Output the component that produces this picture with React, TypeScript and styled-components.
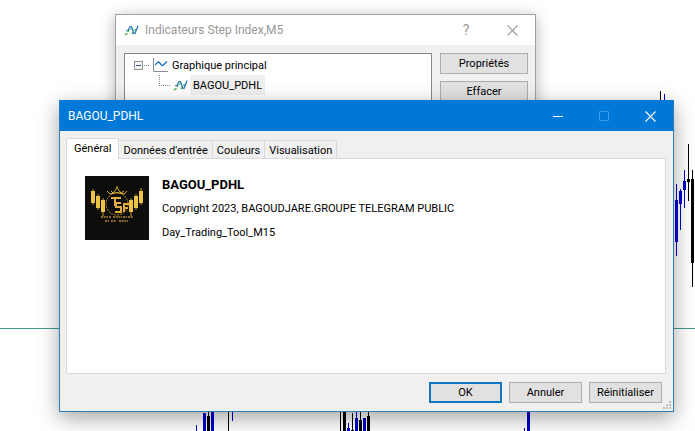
import React from "react";
import styled, { createGlobalStyle, css } from "styled-components";

const uiFont = `Roboto, "Noto Sans", sans-serif`;

const GlobalStyle = createGlobalStyle`
  * { box-sizing: border-box; }
  body { margin: 0; background: #fff; font-family: ${uiFont}; font-size: 11px; line-height: 16px; color: #000; }
  button { font: inherit; color: inherit; }
`;

const Desktop = styled.main`
  position: relative;
  min-height: 100vh;
  overflow: hidden;
`;

const ChartLayer = styled.svg`
  position: absolute;
  inset: 0;
  width: 100%;
  height: 100%;
`;

const IndicatorWindow = styled.section`
  position: absolute;
  top: 14px;
  left: 115px;
  right: 159px;
  background: #f0f0f0;
  border: 1px solid #a0a0a0;
  box-shadow: 0 3px 14px rgba(0, 0, 0, 0.3);
`;

const PropertiesWindow = styled.section`
  position: absolute;
  top: 100px;
  left: 59px;
  right: 21px;
  background: #f0f0f0;
  border: 1px solid #2b7cb8;
  border-top-color: #0078d7;
  box-shadow: 0 6px 20px rgba(0, 0, 0, 0.36);
`;

const TitleBar = styled.header<{ $active?: boolean }>`
  display: flex;
  align-items: center;
  height: 30px;
  padding-left: 8px;
  background: #fff;
  color: #999;
  ${(p) =>
    p.$active &&
    css`
      background: #0078d7;
      color: #fff;
    `}
`;

const WindowTitle = styled.h1`
  flex: 1;
  display: flex;
  align-items: center;
  gap: 6px;
  margin: 0;
  font-size: 12px;
  font-weight: 400;
`;

const CaptionButton = styled.button`
  display: grid;
  place-items: center;
  width: 46px;
  height: 30px;
  padding: 0;
  border: 0;
  background: none;
  font-size: 14px;
`;

const IndicatorBody = styled.div`
  display: flex;
  gap: 8px;
  padding: 8px 7px 8px 8px;
`;

const Tree = styled.ul`
  flex: 1;
  min-height: 96px;
  margin: 0;
  padding: 1px 9px;
  list-style: none;
  background: #fff;
  border: 1px solid #828790;
`;

const TreeItem = styled.li<{ $nested?: boolean }>`
  display: flex;
  align-items: center;
  height: 20px;
  gap: ${(p) => (p.$nested ? "2px" : "3px")};
  padding-left: ${(p) => (p.$nested ? "25px" : "0")};
`;

const Toggle = styled.button`
  width: 15px;
  height: 9px;
  padding: 0;
  border: 0;
  background: none;
  display: flex;
`;

const TreeLabel = styled.span<{ $selected?: boolean }>`
  padding: 3px 3px 1px;
  margin-left: ${(p) => (p.$selected ? "0" : "-2px")};
  background: ${(p) => (p.$selected ? "#f0f0f0" : "none")};
`;

const SideActions = styled.div`
  display: flex;
  flex-direction: column;
  gap: 7px;
  width: 88px;
`;

const PushButton = styled.button<{ $primary?: boolean }>`
  height: 21px;
  padding: 1px 0 0;
  line-height: 16px;
  background: #e1e1e1;
  border: ${(p) => (p.$primary ? "2px solid #0f76c4" : "1px solid #adadad")};
`;

const DialogBody = styled.div`
  padding: 7px 7px 8px 6px;
`;

const TabList = styled.div`
  display: flex;
  align-items: flex-end;
  height: 21px;
`;

const Tab = styled.button<{ $selected?: boolean }>`
  position: relative;
  height: 18px;
  padding: 2px 4px 0;
  background: #f0f0f0;
  border: 1px solid #d9d9d9;
  border-left-width: 0;
  border-bottom: 0;
  margin-bottom: 1px;
  line-height: 16px;
  white-space: nowrap;
  ${(p) =>
    p.$selected &&
    css`
      z-index: 1;
      height: 21px;
      padding: 1px 7px 2px;
      margin-bottom: 0;
      border-left-width: 1px;
      background: #fff;
    `}
`;

const TabPanel = styled.div`
  display: flex;
  gap: 13px;
  min-height: 216px;
  margin-top: -1px;
  padding: 17px 18px;
  background: #fff;
  border: 1px solid #d9d9d9;
`;

const About = styled.div`
  padding-top: 1px;

  p {
    margin: 0 0 8px;
  }
`;

const ProductName = styled.h2`
  margin: 0 0 8px;
  font-size: 13px;
  line-height: 16px;
  font-weight: 700;
`;

const Footer = styled.footer`
  display: grid;
  grid-template-columns: repeat(3, 73px);
  justify-content: end;
  gap: 7px;
  padding: 8px 4px 0 0;
`;

const ResizeGrip = styled.svg`
  position: absolute;
  right: 2px;
  bottom: 2px;
`;

type Candle = { x: number; wick: [number, number]; body?: [number, number]; up?: boolean };

const candles: Candle[] = [
  { x: 660, wick: [91, 110] },
  { x: 664, wick: [94, 110], up: true },
  { x: 676, wick: [184, 256], body: [200, 242], up: true },
  { x: 680, wick: [189, 230], body: [191, 204], up: true },
  { x: 684, wick: [170, 208], body: [181, 190], up: true },
  { x: 688, wick: [144, 201], body: [179, 182] },
  { x: 692, wick: [170, 287], body: [179, 263] },
  { x: 196, wick: [425, 431], up: true },
  { x: 204, wick: [413, 431], body: [413, 431], up: true },
  { x: 208, wick: [400, 431], body: [416, 431] },
  { x: 212, wick: [400, 431], body: [400, 431], up: true },
  { x: 228, wick: [400, 431] },
  { x: 232, wick: [400, 421], up: true },
  { x: 340, wick: [400, 431] },
  { x: 344, wick: [400, 431], body: [400, 431] },
  { x: 348, wick: [423, 431], body: [428, 431], up: true },
  { x: 352, wick: [413, 431], body: [430, 431] },
  { x: 356, wick: [400, 431], body: [418, 431], up: true },
  { x: 360, wick: [400, 431], body: [420, 431] },
  { x: 364, wick: [418, 431], body: [418, 431], up: true },
  { x: 368, wick: [400, 431], body: [416, 431] },
  { x: 524, wick: [428, 431], up: true },
  { x: 528, wick: [400, 431], body: [400, 431], up: true },
];

function PriceChart() {
  return (
    <ChartLayer viewBox="0 0 695 431" preserveAspectRatio="xMaxYMin slice" shapeRendering="crispEdges" aria-hidden="true">
      <path d="M0 328.500H695" stroke="#3f9c8c" />
      {candles.map(({ x, wick, body, up }) => (
        <g key={`${x}-${wick[0]}`} fill={up ? "#0000d0" : "#000"}>
          <rect x={x} y={wick[0]} width="1" height={wick[1] - wick[0]} />
          {body && <rect x={x - 1} y={body[0]} width="3" height={body[1] - body[0]} />}
        </g>
      ))}
    </ChartLayer>
  );
}

function IndicatorIcon() {
  return (
    <svg width="15" height="13" viewBox="0 0 15 13" fill="none" aria-hidden="true">
      <path d="M1 11l3-2M4 8l1-2.500 3.500-1M8 10l2.500-3.500L14 4.500" stroke="#35b04a" strokeWidth="1.300" strokeDasharray="3 1" />
      <path d="M2 7l2-.5L6 2.500h1.500L8.500 5l1 4 1.500.5 1.500-4L14 1.500" stroke="#2a78b8" strokeWidth="1.200" />
    </svg>
  );
}

function ChartIcon() {
  return (
    <svg width="16" height="15" viewBox="0 0 16 15" fill="none" aria-hidden="true">
      <path d="M1.500 0v13.500H16" stroke="#8e8e8e" />
      <path d="M3 7l3-3 1 .2L10 7.500l1-.2L15 3.500" stroke="#2674c2" strokeWidth="1.400" />
    </svg>
  );
}

function CloseIcon() {
  return (
    <svg width="11" height="11" viewBox="0 0 11 11" fill="none" stroke="currentColor" aria-hidden="true">
      <path d="M.5.5l10 10M10.500.5l-10 10" strokeWidth="1.100" />
    </svg>
  );
}

function ProductLogo() {
  return (
    <svg width="64" height="64" viewBox="0 0 64 64" role="img" aria-label="BAGOU_PDHL">
      <rect width="64" height="64" fill="#0d0d0c" />
      <g stroke="#c89b32" strokeWidth="1">
        <path d="M8 13v16M13 18v16M18 22v18M46 22v18M51 18v16M56 12v17" />
      </g>
      <g fill="#efc345">
        <path d="M6 15h4v12H6zM11 20h4v12h-4zM16 24h4v12h-4zM44 24h4v12h-4zM49 20h4v12h-4zM54 15h4v12h-4z" />
      </g>
      <circle cx="32" cy="28" r="11" fill="none" stroke="#b98c2e" strokeDasharray="2 1" />
      <path d="M26 15l2 2 4-5 4 5 3-2M25 18q7-3 14 0M32 10v3M22 15l3 3M42 15l-3 3" fill="none" stroke="#e0ae3c" />
      <g fill="none" stroke="#e3ad42" strokeWidth="2">
        <path d="M26 22h10M30 22v8M36 27h-5v4h5v5h-6M45 28h-6v8M39 32h4" />
      </g>
      <path d="M16 41h7m1 0h2m2 0h9m1 0h4m1 0h5M20 45h4m2 0h5m3 0h9" stroke="#d9ac40" strokeWidth="1.500" strokeDasharray="2 .7" opacity=".8" />
    </svg>
  );
}

const tabs = ["Général", "Données d'entrée", "Couleurs", "Visualisation"];

export default function App() {
  return (
    <>
      <GlobalStyle />
      <Desktop>
        <PriceChart />

        <IndicatorWindow aria-label="Indicateurs">
          <TitleBar>
            <WindowTitle>
              <IndicatorIcon />
              Indicateurs Step Index,M5
            </WindowTitle>
            <CaptionButton aria-label="Aide">?</CaptionButton>
            <CaptionButton aria-label="Fermer">
              <CloseIcon />
            </CaptionButton>
          </TitleBar>
          <IndicatorBody>
            <Tree>
              <TreeItem>
                <Toggle aria-label="Réduire">
                  <svg width="15" height="9" viewBox="0 0 15 9" fill="none" aria-hidden="true">
                    <rect x=".5" y=".5" width="8" height="8" fill="#f6f6f6" stroke="#919191" />
                    <path d="M2 4.500h5" stroke="#3b52a0" />
                    <path d="M10 4.500h5" stroke="#888" strokeDasharray="1 1" />
                  </svg>
                </Toggle>
                <ChartIcon />
                <TreeLabel>Graphique principal</TreeLabel>
              </TreeItem>
              <TreeItem $nested>
                <svg width="12" height="20" viewBox="0 0 12 20" fill="none" aria-hidden="true">
                  <path d="M.5 0v10.500H12" stroke="#888" strokeDasharray="1 1" />
                </svg>
                <IndicatorIcon />
                <TreeLabel $selected>BAGOU_PDHL</TreeLabel>
              </TreeItem>
            </Tree>
            <SideActions>
              <PushButton>Propriétés</PushButton>
              <PushButton>Effacer</PushButton>
            </SideActions>
          </IndicatorBody>
        </IndicatorWindow>

        <PropertiesWindow role="dialog" aria-label="BAGOU_PDHL">
          <TitleBar $active>
            <WindowTitle>BAGOU_PDHL</WindowTitle>
            <CaptionButton aria-label="Réduire">
              <svg width="10" height="10" viewBox="0 0 10 10" aria-hidden="true">
                <path d="M0 5.500h10" stroke="#fff" />
              </svg>
            </CaptionButton>
            <CaptionButton aria-label="Agrandir" disabled>
              <svg width="10" height="10" viewBox="0 0 10 10" fill="none" aria-hidden="true">
                <path d="M.5.5h9v9h-9z" stroke="#3c9be6" />
              </svg>
            </CaptionButton>
            <CaptionButton aria-label="Fermer">
              <CloseIcon />
            </CaptionButton>
          </TitleBar>
          <DialogBody>
            <TabList role="tablist">
              {tabs.map((name, i) => (
                <Tab key={name} role="tab" aria-selected={i === 0} $selected={i === 0}>
                  {name}
                </Tab>
              ))}
            </TabList>
            <TabPanel role="tabpanel">
              <ProductLogo />
              <About>
                <ProductName>BAGOU_PDHL</ProductName>
                <p>Copyright 2023, BAGOUDJARE.GROUPE TELEGRAM PUBLIC</p>
                <p>Day_Trading_Tool_M15</p>
              </About>
            </TabPanel>
            <Footer>
              <PushButton $primary>OK</PushButton>
              <PushButton>Annuler</PushButton>
              <PushButton>Réinitialiser</PushButton>
            </Footer>
          </DialogBody>
          <ResizeGrip width="8" height="8" viewBox="0 0 8 8" fill="#bfbfbf" aria-hidden="true">
            <path d="M6 0h2v2H6zM3 3h2v2H3zM6 3h2v2H6zM0 6h2v2H0zM3 6h2v2H3zM6 6h2v2H6z" />
          </ResizeGrip>
        </PropertiesWindow>
      </Desktop>
    </>
  );
}
